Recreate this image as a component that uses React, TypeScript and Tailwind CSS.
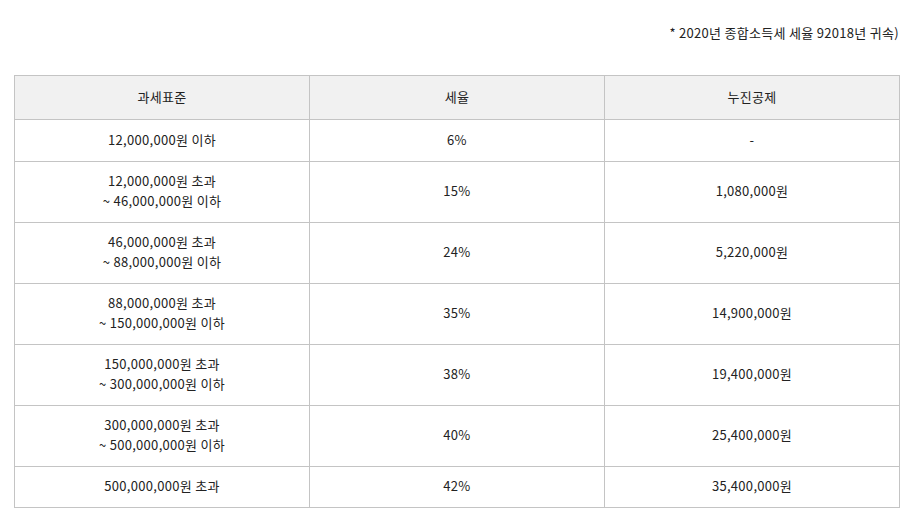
const rows: { base: string[]; rate: string; deduct: string }[] = [
  { base: ["12,000,000원 이하"], rate: "6%", deduct: "-" },
  { base: ["12,000,000원 초과", "~ 46,000,000원 이하"], rate: "15%", deduct: "1,080,000원" },
  { base: ["46,000,000원 초과", "~ 88,000,000원 이하"], rate: "24%", deduct: "5,220,000원" },
  { base: ["88,000,000원 초과", "~ 150,000,000원 이하"], rate: "35%", deduct: "14,900,000원" },
  { base: ["150,000,000원 초과", "~ 300,000,000원 이하"], rate: "38%", deduct: "19,400,000원" },
  { base: ["300,000,000원 초과", "~ 500,000,000원 이하"], rate: "40%", deduct: "25,400,000원" },
  { base: ["500,000,000원 초과"], rate: "42%", deduct: "35,400,000원" },
];

export default function App() {
  return (
    <div className="w-[917px] h-[530px] bg-white pl-[14px] pr-[17px] pt-[23px] font-['Malgun_Gothic','Noto_Sans_CJK_KR',sans-serif] text-[13px] leading-[20px] tracking-[0.3px] text-[#222]">
      <p className="text-right pr-[1px]">* 2020년 종합소득세 세율 92018년 귀속)</p>

      <table className="mt-[32px] w-[886px] border-collapse table-fixed text-center">
        <thead>
          <tr className="h-[44px] bg-[#f1f1f1]">
            <th className="border border-[#c4c4c4] pb-[2px] font-normal">과세표준</th>
            <th className="border border-[#c4c4c4] pb-[2px] font-normal">세율</th>
            <th className="border border-[#c4c4c4] pb-[2px] font-normal">누진공제</th>
          </tr>
        </thead>
        <tbody>
          {rows.map((r, i) => (
            <tr key={i} className={r.base.length > 1 ? "h-[61px]" : i === 0 ? "h-[42px]" : "h-[41px]"}>
              <td className="border border-[#c4c4c4] pb-[2px]">
                {r.base.map((line) => (
                  <div key={line}>{line}</div>
                ))}
              </td>
              <td className="border border-[#c4c4c4] pb-[2px]">{r.rate}</td>
              <td className="border border-[#c4c4c4] pb-[2px]">{r.deduct}</td>
            </tr>
          ))}
        </tbody>
      </table>
    </div>
  );
}
